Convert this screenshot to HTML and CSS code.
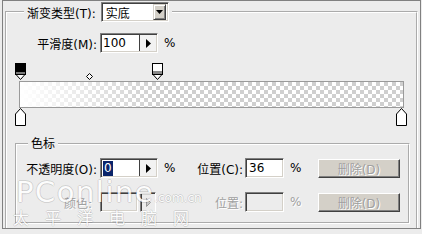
FILE: index.html
```html
<!DOCTYPE html>
<html lang="zh-CN">
<head>
<meta charset="utf-8">
<title>渐变编辑器</title>
<link rel="stylesheet" href="styles.css">
</head>
<body>
<div class="frame">
  <fieldset class="outer">
    <legend class="outer-legend">
      <span class="legend-row">
        <span class="legend-label">渐变类型(T):</span>
        <span class="select">
          <span class="select-text">实底</span>
          <span class="select-btn"><svg width="7" height="4" viewBox="0 0 7 4"><polygon points="0,0 7,0 3.5,4" fill="#000"/></svg></span>
        </span>
      </span>
    </legend>

    <div class="row smooth-row">
      <span class="lbl lbl-smooth">平滑度(M):</span>
      <span class="spin">
        <span class="spin-text">100</span>
        <span class="spin-btn"><svg width="5" height="9" viewBox="0 0 5 9"><polygon points="0,0 5,4.5 0,9" fill="#000"/></svg></span>
      </span>
      <span class="unit">%</span>
    </div>

    <div class="gradient">
      <svg class="stop stop-top stop-a" width="11" height="17" viewBox="0 0 11 17">
        <rect x="0.5" y="0.5" width="10" height="11" fill="#000" stroke="#000"/>
        <rect x="1" y="9" width="9" height="2" fill="#7a7a7a"/>
        <polygon points="1,11.5 10,11.5 5.5,16.5" fill="#fff" stroke="#000"/>
      </svg>
      <svg class="stop diamond" width="7" height="7" viewBox="0 0 7 7">
        <polygon points="3.5,0.5 6.5,3.5 3.5,6.5 0.5,3.5" fill="#fff" stroke="#000"/>
      </svg>
      <svg class="stop stop-top stop-b" width="11" height="17" viewBox="0 0 11 17">
        <rect x="0.5" y="0.5" width="10" height="11" fill="#fff" stroke="#000"/>
        <rect x="1" y="8" width="9" height="3" fill="#8a8a8a"/>
        <polygon points="1,11.5 10,11.5 5.5,16.5" fill="#fff" stroke="#000"/>
      </svg>
      <div class="bar"></div>
      <svg class="stop stop-bottom stop-c" width="11" height="18" viewBox="0 0 11 18">
        <polygon points="5.5,0.5 10.5,6 10.5,17.5 0.5,17.5 0.5,6" fill="#fff" stroke="#000"/>
      </svg>
      <svg class="stop stop-bottom stop-d" width="11" height="18" viewBox="0 0 11 18">
        <polygon points="5.5,0.5 10.5,6 10.5,17.5 0.5,17.5 0.5,6" fill="#fff" stroke="#000"/>
      </svg>
    </div>

    <fieldset class="inner">
      <legend class="inner-legend">色标</legend>
      <div class="stop-grid">
        <span class="lbl">不透明度(O):</span>
        <span class="spin">
          <span class="spin-text"><span class="sel">0</span></span>
          <span class="spin-btn"><svg width="5" height="9" viewBox="0 0 5 9"><polygon points="0,0 5,4.5 0,9" fill="#000"/></svg></span>
        </span>
        <span class="unit">%</span>
        <span class="lbl lbl-pos">位置(C):</span>
        <span class="field"><span class="field-text">36</span></span>
        <span class="unit">%</span>
        <span class="btn">删除(D)</span>

        <span class="lbl lbl-color disabled">颜色:</span>
        <span class="color-pick">
          <span class="field field-off swatch"></span>
          <span class="pick-btn"><svg width="5" height="9" viewBox="0 0 5 9"><polygon points="0.5,0.5 4.5,4.5 0.5,8.5" fill="#c8c8c8" stroke="#9a9a9a"/></svg></span>
        </span>
        <span class="spacer"></span>
        <span class="lbl lbl-pos disabled">位置:</span>
        <span class="field field-off"></span>
        <span class="unit disabled">%</span>
        <span class="btn">删除(D)</span>
      </div>
    </fieldset>
  </fieldset>

  <div class="watermark">
    <div class="wm-en">PConline<span class="wm-small">.com.cn</span></div>
    <div class="wm-cn">太平洋电脑网</div>
  </div>
</div>
</body>
</html>
```

FILE: styles.css
```css
* {
  box-sizing: border-box;
}

body {
  margin: 0;
  background: #ececec;
  font: 12px "DejaVu Sans", "Noto Sans CJK SC", sans-serif;
  color: #000;
}

.frame {
  position: relative;
  width: 419px;
  height: 229px;
  margin-left: 2px;
  border: 1px solid #808080;
  overflow: hidden;
  background: #ececec;
}

.outer {
  margin: 1px 2px 0 2px;
  padding: 0;
  border: 2px groove #fff;
  border-bottom: none;
  min-width: 0;
  height: 240px;
}

.outer-legend {
  margin-left: 17px;
  padding: 0 3px;
  height: 20px;
}

.legend-row {
  display: flex;
  align-items: center;
  height: 20px;
}

.legend-label {
  margin-right: 5px;
  white-space: nowrap;
}

.select {
  display: flex;
  align-items: center;
  width: 68px;
  height: 20px;
  padding: 2px;
  background: #fff;
  border: 1px solid;
  border-color: #808080 #fff #fff #808080;
  box-shadow: inset 1px 1px #404040, inset -1px -1px #d4d0c8;
}

.select-text {
  flex: 1;
  padding-left: 2px;
}

.select-btn {
  display: flex;
  align-items: center;
  justify-content: center;
  width: 13px;
  height: 16px;
  background: #d4d0c8;
  border: 1px solid;
  border-color: #d4d0c8 #404040 #404040 #d4d0c8;
  box-shadow: inset 1px 1px #fff, inset -1px -1px #808080;
}

.row {
  display: flex;
  align-items: center;
  height: 20px;
}

.smooth-row {
  margin-top: 11px;
}

.lbl {
  text-align: right;
  padding-right: 3px;
  white-space: nowrap;
}

.lbl-smooth {
  width: 93px;
}

.spin {
  display: flex;
  width: 58px;
  height: 20px;
  background: #fff;
  border: 1px solid;
  border-color: #808080 #fff #fff #808080;
  box-shadow: inset 1px 1px #404040, inset -1px -1px #d4d0c8;
  padding: 1px;
}

.spin-text {
  flex: 1;
  display: flex;
  align-items: center;
  padding-left: 1px;
  background: #fff;
}

.sel {
  background: #0a246a;
  color: #fff;
  padding: 0 1px;
  line-height: 15px;
}

.spin-btn {
  display: flex;
  align-items: center;
  justify-content: center;
  width: 17px;
  border-left: 1px solid #404040;
  background: #f2f2f2;
}

.unit {
  padding-left: 6px;
}

.gradient {
  position: relative;
  width: 385px;
  height: 65px;
  margin: 8px 0 0 12px;
  padding-top: 20px;
}

.bar {
  height: 27px;
  border: 1px solid #9a9a9a;
  background:
    linear-gradient(to right, #fff 0%, rgba(255, 255, 255, 0) 36%),
    repeating-conic-gradient(#cfcfcf 0 25%, #fff 0 50%) 0 0 / 8px 8px;
}

.stop {
  position: absolute;
  display: block;
}

.stop-top {
  top: 2px;
}

.stop-a {
  left: -4px;
}

.stop-b {
  left: 133px;
}

.diamond {
  left: 67px;
  top: 12px;
}

.stop-bottom {
  top: 47px;
}

.stop-c {
  left: -4px;
}

.stop-d {
  left: 377px;
}

.inner {
  margin: 10px 6px 0 8px;
  padding: 0 0 10px 0;
  border: 2px groove #fff;
  min-width: 0;
}

.inner-legend {
  margin-left: 11px;
  padding: 0 3px;
  line-height: 16px;
}

.stop-grid {
  display: grid;
  grid-template-columns: 83px 58px 31px 56px 39px 34px 82px;
  grid-auto-rows: 20px;
  row-gap: 14px;
  align-items: center;
  margin-top: 6px;
}

.lbl-pos {
  padding-right: 2px;
}

.lbl-color {
  padding-right: 8px;
}

.field {
  display: flex;
  align-items: center;
  height: 20px;
  padding-left: 3px;
  background: #fff;
  border: 1px solid;
  border-color: #808080 #fff #fff #808080;
  box-shadow: inset 1px 1px #404040, inset -1px -1px #d4d0c8;
}

.field-off {
  background: #ececec;
}

.color-pick {
  display: flex;
  align-items: center;
  height: 20px;
}

.swatch {
  width: 38px;
  margin-right: 2px;
}

.pick-btn {
  display: flex;
  align-items: center;
  justify-content: center;
  width: 16px;
  height: 20px;
  border: 1px solid;
  border-color: #808080 #fff #fff #808080;
  box-shadow: inset 1px 1px #404040;
}

.btn {
  display: flex;
  align-items: center;
  justify-content: center;
  height: 19px;
  background: #d4d0c8;
  border: 1px solid;
  border-color: #fff #404040 #404040 #fff;
  box-shadow: inset -1px -1px #808080;
  color: #a0a0a0;
  text-shadow: 1px 1px #fff;
}

.disabled {
  color: #a0a0a0;
  text-shadow: 1px 1px #fff;
}

.watermark {
  position: absolute;
  left: 10px;
  top: 179px;
  color: #fff;
  text-shadow: 1px 0 0 rgba(0, 0, 0, 0.13), -1px 0 0 rgba(0, 0, 0, 0.13), 0 1px 0 rgba(0, 0, 0, 0.13), 0 -1px 0 rgba(0, 0, 0, 0.13);
  opacity: 0.85;
  pointer-events: none;
}

.wm-en {
  padding-left: 3px;
  font: 29px/24px "DejaVu Sans", sans-serif;
  letter-spacing: 1.5px;
  white-space: nowrap;
}

.wm-small {
  font-size: 12px;
  letter-spacing: 0;
}

.wm-cn {
  margin-top: -1px;
  font: 16px/16px "Noto Sans CJK SC", sans-serif;
  letter-spacing: 16px;
  white-space: nowrap;
}
```
